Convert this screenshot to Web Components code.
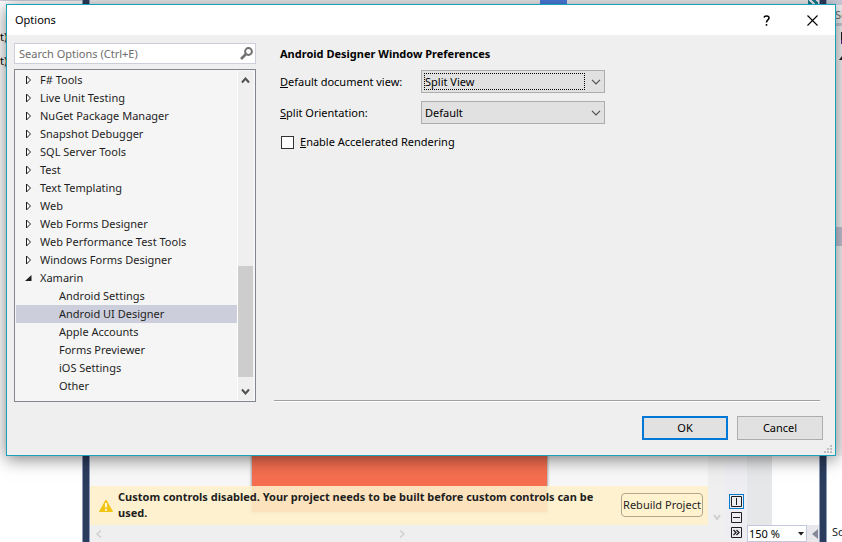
<!DOCTYPE html>
<html lang="en">
<head>
<meta charset="utf-8">
<title>Options</title>
<style>
html, body { height: 100%; }
body { margin: 0; overflow: hidden; background: #fff; color: #1e1e1e; font: 11px/18px "Noto Sans", "Open Sans", sans-serif; }
</style>
</head>
<body>
<ide-desktop>
  <designer-pane slot="designer"></designer-pane>
  <options-dialog slot="dialog" heading="Options">
    <search-box slot="side" label="Search Options (Ctrl+E)"></search-box>
    <options-tree slot="side"></options-tree>
    <preferences-form slot="main"></preferences-form>
  </options-dialog>
</ide-desktop>
<script>
const define = (name, html, setup) => customElements.define(name, class extends HTMLElement {
  connectedCallback() {
    if (this.shadowRoot) return;
    const t = document.createElement('template');
    t.innerHTML = '<style>*{box-sizing:border-box}:host{box-sizing:border-box}button,input,select{font:inherit;color:inherit;margin:0}</style>' + html;
    this.attachShadow({ mode: 'open' }).append(t.content.cloneNode(true));
    if (setup) setup(this, this.shadowRoot);
  }
});

define('ide-desktop', `
<style>
:host { display: grid; position: relative; height: 100vh; grid-template-columns: 82px 8px minmax(0,1fr) 21px 72px 8px 15px; overflow: hidden; }
.left { background: #fff; padding-top: 24px; line-height: 24px; border-top: 1px solid #cccedb; overflow: hidden; color: #000; }
.left p { margin: 0; }
.bar { background: #2c3c5c; border: solid #8d9bbc; border-width: 0 1px; }
.strip { background: #eeeef2; display: flex; flex-direction: column; align-items: center; justify-content: flex-end; gap: 2px; padding-bottom: 3px; }
.strip button { border: 0; background: none; padding: 0; width: 15px; height: 13px; display: grid; place-items: center; }
.strip button.on { height: 15px; border: 1px solid #007acc; }
.code { display: flex; flex-direction: column; }
.page { flex: 1; display: flex; background: #fff; }
.page i { width: 25px; background: #e6e7e8; }
.zoom { display: flex; align-items: center; background: #e8e8ec; height: 17px; }
.combo { display: grid; width: 60px; height: 17px; }
.combo > * { grid-area: 1/1; }
.combo svg { align-self: center; justify-self: end; margin-right: 3px; pointer-events: none; }
select { appearance: none; border: 1px solid #c3c8df; background: #fff; padding: 0 1px; line-height: 15px; border-radius: 0; color: #000; }
.zoom > svg { margin-left: 5px; }
.right { background: linear-gradient(#cccedb 5px, #f4f4f6 5px 23px, #cccedb 23px 26px, #f5f5f5 26px 456px, #fff 456px); display: flex; flex-direction: column; overflow: hidden; padding: 6px 0 1px 5px; color: #1e1e1e; }
.right .s { color: #717171; padding-left: 3px; }
.right .node { align-self: flex-end; margin-top: 8px; }
.right .sel { background: #c4c5d5; height: 19px; margin: 167px 0 auto -5px; }
.top { position: absolute; inset: 0 23px auto 90px; height: 4px; display: flex; background: #eeeef2; }
.top i { width: 27px; margin-left: 450px; background: #4a7dde; }
.top b { width: 10px; margin-left: 241px; background: repeating-linear-gradient(45deg, #1b7f93 0 3px, #eeeef2 3px 5px); }
</style>
<section class="left"><p>t)</p><p>t)</p></section>
<div class="bar"></div>
<slot name="designer"></slot>
<div class="strip">
  <button class="on" aria-label="Vertical split"><svg width="11" height="11" fill="none" stroke="#1e1e1e"><path d="M.5 .5h10v10h-10zM5.500 2v7"/></svg></button>
  <button aria-label="Horizontal split"><svg width="11" height="11" fill="none" stroke="#1e1e1e"><path d="M.5 .5h10v10h-10zM2 5.500h7"/></svg></button>
  <button aria-label="Collapse pane"><svg width="11" height="11" fill="none" stroke="#1e1e1e"><path d="M.5 .5h10v10h-10z"/><path stroke-width="1.300" d="M2.500 3l2.500 2.500L2.500 8M5.500 3L8 5.500 5.500 8"/></svg></button>
</div>
<section class="code">
  <div class="page"><i></i></div>
  <div class="zoom">
    <div class="combo"><select aria-label="Zoom"><option>150 %</option></select><svg width="6" height="4"><path d="M0 0h6L3 3.500z" fill="#1e1e1e"/></svg></div>
    <svg width="6" height="10"><path d="M6 0v10L0 5z" fill="#868999"/></svg>
  </div>
</section>
<div class="bar"></div>
<section class="right"><span class="s">Se</span><svg class="node" width="3" height="28"><path d="M2 0h1v8H2z" fill="#1e1e1e"/><path d="M2 8h1v4H2z" fill="#68217a"/><path d="M3 24v4H0z" fill="#1e1e1e"/></svg><div class="sel"></div><span>So</span></section>
<div class="top"><i></i><b></b></div>
<slot name="dialog"></slot>`);

define('designer-pane', `
<style>
:host { display: grid; grid-template: minmax(0,1fr) 17px / minmax(0,1fr) 18px; background: #efeff0; }
.canvas { position: relative; display: flex; background: #f7f7f7; padding: 0 161px 13px 162px; }
.surface { flex: 1; background: #f56e50; box-shadow: 0 0 3px #666; }
.v { display: flex; align-items: flex-end; justify-content: center; padding-bottom: 4px; }
.h { display: flex; align-items: center; justify-content: space-between; padding: 0 6px; }
svg { flex: none; }
.note { position: absolute; inset: auto 0 0; display: flex; align-items: center; gap: 5px; min-height: 39px; padding: 3px 5px 4px 9px; background: rgba(253,239,202,.9); }
.note p { flex: 1; margin: 0; font-weight: 700; line-height: 16px; }
button { width: 82px; height: 24px; padding: 0; white-space: nowrap; flex: none; border: 1px solid #b0a68c; border-radius: 4px; background: #fff3cf; }
</style>
<div class="canvas"><div class="surface"></div>
  <div class="note" role="alert">
    <svg width="14" height="13"><path d="M7 1L13.500 12.500H.5z" fill="#f2c413" stroke="#f2c413" stroke-linejoin="round"/><path d="M7 4v4.500M7 10v1.700" stroke="#fff" stroke-width="1.700"/></svg>
    <p>Custom controls disabled. Your project needs to be built before custom controls can be used.</p>
    <button>Rebuild Project</button>
  </div>
</div>
<div class="v"><svg width="8" height="7" fill="none" stroke="#cfcfcf" stroke-width="2"><path d="M1 1l3 4 3-4"/></svg></div>
<div class="h"><svg width="6" height="8" fill="none" stroke="#cfcfcf" stroke-width="1.500"><path d="M5 .5L1 4l4 3.500"/></svg><svg width="6" height="8" fill="none" stroke="#cfcfcf" stroke-width="1.500"><path d="M1 .5L5 4 1 7.500"/></svg><span></span></div>`);

define('options-dialog', `
<style>
:host { position: absolute; inset: 4px 6px 86px 6px; display: flex; flex-direction: column; background: #efefef; border: 1px solid #1a9fba; box-shadow: 0 3px 16px rgba(0,0,0,.5); color: #000; }
header { display: flex; align-items: center; height: 30px; padding: 0 17px 0 8px; background: #fff; }
h1 { flex: 1; margin: 0; font-size: 11px; font-weight: 400; }
header button { border: 0; background: none; padding: 0; display: grid; place-items: center; width: 12px; height: 18px; }
header button + button { margin-left: 34px; }
.body { flex: 1; min-height: 0; display: grid; grid-template-columns: 242px minmax(0,1fr); gap: 18px; padding: 8px 15px 0 7px; }
.side { display: flex; flex-direction: column; gap: 5px; min-height: 0; }
.main { border-bottom: 1px solid #a0a0a0; padding-left: 6px; box-shadow: 0 1px #fff; margin-bottom: 1px; }
footer { display: flex; justify-content: flex-end; align-items: center; gap: 9px; padding: 14px 12px 15px; }
footer button { width: 86px; height: 24px; border: 1px solid #adadad; background: #e1e1e1; padding: 0; }
footer button.ok { border: 2px solid #0078d7; }
.grip { position: absolute; right: 3px; bottom: 2px; }
</style>
<header><h1></h1>
<button aria-label="Help"><svg width="7" height="11" fill="none" stroke="#000" stroke-width="1.500"><path d="M1 2.500C1.500 .4 6 .3 6 3 6 5 3.500 4.800 3.500 7.500M3.500 9v1.800"/></svg></button>
<button aria-label="Close"><svg width="11" height="11" stroke="#000" stroke-width="1.100"><path d="M.5 .5l10 10M10.500 .5l-10 10"/></svg></button></header>
<div class="body"><div class="side"><slot name="side"></slot></div><div class="main"><slot name="main"></slot></div></div>
<footer><button class="ok">OK</button><button>Cancel</button></footer>
<svg class="grip" width="8" height="8" fill="#bfbfbf"><path d="M6 0h2v2H6zM3 3h2v2H3zM6 3h2v2H6zM0 6h2v2H0zM3 6h2v2H3zM6 6h2v2H6z"/></svg>`,
(el, r) => { r.querySelector('h1').textContent = el.getAttribute('heading'); });

define('search-box', `
<style>
:host { display: flex; align-items: center; height: 21px; border: 1px solid #cccedb; background: #fff; padding: 0 2px 0 4px; flex: none; }
input { flex: 1; min-width: 0; border: 0; padding: 0; outline: 0; background: none; height: 19px; }
input::placeholder { color: #6d6d6d; opacity: 1; }
button { border: 0; padding: 0; background: none; display: flex; }
</style>
<input type="text"><button aria-label="Search"><svg width="13" height="13" fill="none" stroke="#717171"><circle cx="8.500" cy="4.500" r="3.400" stroke-width="2"/><path d="M6 7L1 12" stroke-width="2.600"/></svg></button>`,
(el, r) => { const i = r.querySelector('input'); i.placeholder = el.getAttribute('label'); i.setAttribute('aria-label', i.placeholder); });

define('options-tree', `
<style>
:host { flex: 1; min-height: 0; display: flex; border: 1px solid #828790; background: #f5f5f5; padding: 1px 2px 1px 1px; color: #1e1e1e; }
ul { list-style: none; margin: 0; padding: 0; flex: 1; overflow: hidden; }
li { display: flex; align-items: center; height: 18px; padding-left: 9px; white-space: nowrap; }
li svg { width: 7px; height: 10px; margin-right: 8px; flex: none; }
li.child { padding-left: 43px; }
li.selected { background: #cccedb; }
.bar { display: flex; flex-direction: column; align-items: center; justify-content: space-between; width: 16px; background: #efefef; border-left: 1px solid #fff; padding: 6px 0 5px; }
.bar i { width: 15px; height: 111px; background: #cdcdcd; margin: auto 0 11px; }
</style>
<ul role="tree"></ul>
<div class="bar"><svg width="9" height="7" fill="none" stroke="#505050" stroke-width="2"><path d="M1 5.500l3.500-4 3.500 4"/></svg><i></i><svg width="9" height="7" fill="none" stroke="#505050" stroke-width="2"><path d="M1 1.500l3.500 4 3.500-4"/></svg></div>`,
(el, r) => {
  const closed = '<svg viewBox="0 0 7 10" fill="#fff" stroke="#1e1e1e"><path d="M1.500 1v8L5.500 5z"/></svg>';
  const open = '<svg viewBox="0 0 7 10"><path d="M6.500 2v6H0z" fill="#1e1e1e"/></svg>';
  const item = (text, cls = '', icon = closed) => `<li role="treeitem" class="${cls}">${icon}<span>${text}</span></li>`;
  const groups = ['F# Tools', 'Live Unit Testing', 'NuGet Package Manager', 'Snapshot Debugger', 'SQL Server Tools', 'Test', 'Text Templating', 'Web', 'Web Forms Designer', 'Web Performance Test Tools', 'Windows Forms Designer'];
  const pages = ['Android Settings', 'Android UI Designer', 'Apple Accounts', 'Forms Previewer', 'iOS Settings', 'Other'];
  r.querySelector('ul').innerHTML = groups.map(g => item(g)).join('') + item('Xamarin', '', open)
    + pages.map(p => item(p, p === 'Android UI Designer' ? 'child selected' : 'child', '')).join('') + item('XAML Designer');
});

define('preferences-form', `
<style>
:host { display: block; }
h2 { margin: 0 0 5px; font-size: 11px; line-height: 22px; font-weight: 700; }
form { display: grid; grid-template-columns: 141px 184px; gap: 8px 0; align-items: center; }
.select { display: grid; }
.select > * { grid-area: 1/1; }
select { appearance: none; height: 23px; border: 1px solid #adadad; border-radius: 0; background: #e1e1e1; padding: 0 3px; outline: 0; }
.select svg { align-self: center; justify-self: end; margin-right: 4px; pointer-events: none; }
.focus { border: 1px dotted #000; margin: 3px 20px 3px 3px; pointer-events: none; }
.check { grid-column: 1/-1; display: flex; align-items: center; gap: 6px; height: 20px; padding-left: 1px; }
input { appearance: none; width: 13px; height: 13px; border: 1px solid #333; background: #fff; }
</style>
<h2>Android Designer Window Preferences</h2>
<form>
<label for="view"><u>D</u>efault document view:</label>
<div class="select"><select id="view"><option>Split View</option></select><span class="focus"></span><svg width="10" height="6" fill="none" stroke="#505050" stroke-width="1.200"><path d="M1 .8l4 4 4-4"/></svg></div>
<label for="split"><u>S</u>plit Orientation:</label>
<div class="select"><select id="split"><option>Default</option></select><svg width="10" height="6" fill="none" stroke="#505050" stroke-width="1.200"><path d="M1 .8l4 4 4-4"/></svg></div>
<div class="check"><input type="checkbox" id="accel"><label for="accel"><u>E</u>nable Accelerated Rendering</label></div>
</form>`);
</script>
</body>
</html>
